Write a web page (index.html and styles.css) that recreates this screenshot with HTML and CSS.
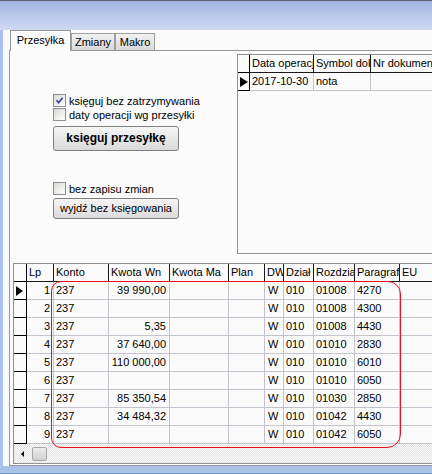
FILE: index.html
```html
<!DOCTYPE html>
<html lang="pl">
<head>
<meta charset="utf-8">
<title>Przesyłka</title>
<link rel="stylesheet" href="styles.css">
</head>
<body>
<div class="titlebar"></div>
<div class="main">
  <div class="tabs">
    <div class="tab active">Przesyłka</div>
    <div class="tab t2">Zmiany</div>
    <div class="tab t3">Makro</div>
  </div>
  <div class="page">
    <div class="top">
      <div class="opts">
        <label class="cb"><span class="box"><svg width="11" height="11" viewBox="0 0 11 11"><path d="M2.5 5.2 L4.6 7.6 L8.6 2.8" fill="none" stroke="#3a4aa8" stroke-width="1.7"/></svg></span>księguj bez zatrzymywania</label>
        <label class="cb"><span class="box"></span>daty operacji wg przesyłki</label>
        <div class="btn bold">księguj przesyłkę</div>
        <label class="cb cb3"><span class="box"></span>bez zapisu zmian</label>
        <div class="btn small">wyjdź bez księgowania</div>
      </div>
      <div class="grid1">
        <div class="r1 hdr">
          <div class="c ind"></div>
          <div class="c h">Data operacji</div>
          <div class="c h">Symbol dokumentu</div>
          <div class="c h">Nr dokumentu</div>
        </div>
        <div class="r1">
          <div class="c ind"><span class="arrow"></span></div>
          <div class="c">2017-10-30</div>
          <div class="c">nota</div>
          <div class="c"></div>
        </div>
      </div>
    </div>
    <div class="grid2">
      <div class="r2 hdr">
        <div class="c ind"></div>
        <div class="c h">Lp</div>
        <div class="c h">Konto</div>
        <div class="c h">Kwota Wn</div>
        <div class="c h">Kwota Ma</div>
        <div class="c h">Plan</div>
        <div class="c h">DW</div>
        <div class="c h">Dział</div>
        <div class="c h">Rozdział</div>
        <div class="c h">Paragraf</div>
        <div class="c h last">EU</div>
      </div>
      <div class="r2"><div class="c ind"><span class="arrow"></span></div><div class="c num">1</div><div class="c">237</div><div class="c num">39 990,00</div><div class="c"></div><div class="c"></div><div class="c dw">W</div><div class="c">010</div><div class="c">01008</div><div class="c">4270</div><div class="c last"></div></div>
      <div class="r2"><div class="c ind"></div><div class="c num">2</div><div class="c">237</div><div class="c num"></div><div class="c"></div><div class="c"></div><div class="c dw">W</div><div class="c">010</div><div class="c">01008</div><div class="c">4300</div><div class="c last"></div></div>
      <div class="r2"><div class="c ind"></div><div class="c num">3</div><div class="c">237</div><div class="c num">5,35</div><div class="c"></div><div class="c"></div><div class="c dw">W</div><div class="c">010</div><div class="c">01008</div><div class="c">4430</div><div class="c last"></div></div>
      <div class="r2"><div class="c ind"></div><div class="c num">4</div><div class="c">237</div><div class="c num">37 640,00</div><div class="c"></div><div class="c"></div><div class="c dw">W</div><div class="c">010</div><div class="c">01010</div><div class="c">2830</div><div class="c last"></div></div>
      <div class="r2"><div class="c ind"></div><div class="c num">5</div><div class="c">237</div><div class="c num">110 000,00</div><div class="c"></div><div class="c"></div><div class="c dw">W</div><div class="c">010</div><div class="c">01010</div><div class="c">6010</div><div class="c last"></div></div>
      <div class="r2"><div class="c ind"></div><div class="c num">6</div><div class="c">237</div><div class="c num"></div><div class="c"></div><div class="c"></div><div class="c dw">W</div><div class="c">010</div><div class="c">01010</div><div class="c">6050</div><div class="c last"></div></div>
      <div class="r2"><div class="c ind"></div><div class="c num">7</div><div class="c">237</div><div class="c num">85 350,54</div><div class="c"></div><div class="c"></div><div class="c dw">W</div><div class="c">010</div><div class="c">01030</div><div class="c">2850</div><div class="c last"></div></div>
      <div class="r2"><div class="c ind"></div><div class="c num">8</div><div class="c">237</div><div class="c num">34 484,32</div><div class="c"></div><div class="c"></div><div class="c dw">W</div><div class="c">010</div><div class="c">01042</div><div class="c">4430</div><div class="c last"></div></div>
      <div class="r2"><div class="c ind"></div><div class="c num">9</div><div class="c">237</div><div class="c num"></div><div class="c"></div><div class="c"></div><div class="c dw">W</div><div class="c">010</div><div class="c">01042</div><div class="c">6050</div><div class="c last"></div></div>
      <div class="sb">
        <div class="sb-arrow"><span class="larr"></span></div>
        <div class="thumb"></div>
      </div>
    </div>
  </div>
</div>
<div class="bottom"></div>
<div class="annot"></div>
</body>
</html>
```

FILE: styles.css
```css
* { box-sizing: border-box; }
html, body { margin: 0; padding: 0; }
body {
  width: 432px;
  height: 474px;
  overflow: hidden;
  background: #fafafa;
  font-family: "Liberation Sans", Arial, sans-serif;
  font-size: 11px;
  color: #000;
  border-top: 1px solid #5c5f70;
  position: relative;
}
.titlebar {
  height: 29px;
  background: linear-gradient(#a2b4e2, #cfdaf2);
}
.main {
  height: 436px;
  border-left: 3px solid #abc0e8;
  padding-left: 6px;
  overflow: hidden;
}
.tabs {
  height: 20px;
  display: flex;
  align-items: flex-end;
  padding-left: 1px;
  position: relative;
  z-index: 1;
}
.tab {
  height: 17px;
  border: 1px solid #a0a0a0;
  border-bottom: none;
  background: linear-gradient(#f2f2f2, #d9d9d9);
  line-height: 16px;
  text-align: center;
  white-space: nowrap;
}
.tab.active {
  width: 61px;
  height: 21px;
  margin-bottom: -1px;
  padding-top: 1px;
  background: #fbfbfb;
  border-color: #919b9c;
}
.t2 { width: 44px; }
.t3 { width: 40px; }
.page {
  height: 416px;
  width: 470px;
  border: 1px solid #919b9c;
  background: #fbfbfb;
}
.top {
  height: 212px;
  display: flex;
}
.opts {
  width: 227px;
  padding: 43px 0 0 43px;
}
.cb {
  display: flex;
  align-items: center;
  height: 13px;
  margin-bottom: 1px;
  white-space: nowrap;
}
.box {
  width: 13px;
  height: 13px;
  margin-right: 3px;
  border: 1px solid #8e8f8f;
  background: linear-gradient(135deg, #d8d8d3, #ffffff);
  display: flex;
}
.btn {
  width: 126px;
  border: 1px solid #7f7f7f;
  border-radius: 3px;
  background: linear-gradient(#f6f6f6, #dadada);
  text-align: center;
  white-space: nowrap;
}
.btn.bold {
  height: 25px;
  line-height: 23px;
  margin-top: 5px;
  font-weight: bold;
  font-size: 12px;
}
.cb3 { margin-top: 31px; }
.btn.small {
  height: 21px;
  line-height: 19px;
  margin-top: 3px;
}
.grid1 {
  margin-top: 3px;
  height: 200px;
  width: 240px;
  border: 1px solid #8f8f8f;
  border-right: none;
  overflow: hidden;
}
.r1 {
  display: grid;
  grid-template-columns: 12px 64px 57px 100px;
}
.r2 {
  display: grid;
  grid-template-columns: 13px 27px 55px 61px 59px 36px 19px 30px 41px 45px 60px;
}
.c {
  height: 18px;
  line-height: 17px;
  border-right: 1px solid #c4c2cc;
  border-bottom: 1px solid #c4c2cc;
  padding: 0 3px 0 2px;
  white-space: nowrap;
  overflow: hidden;
}
.hdr .c {
  border-right-color: #1a1a1a;
  border-bottom-color: #1a1a1a;
}
.grid1 .hdr .c { height: 18px; }
.c.ind {
  border-right-color: #000;
  border-bottom-color: #000;
  padding: 0 0 0 2px;
  display: flex;
  align-items: center;
}
.c.num { text-align: right; }
.c.dw { padding-left: 3px; }
.c.last { border-right: none; }
.arrow {
  width: 0;
  height: 0;
  border-left: 7px solid #000;
  border-top: 5px solid transparent;
  border-bottom: 5px solid transparent;
}
.grid1 .arrow {
  border-left-width: 8px;
  border-top-width: 5.5px;
  border-bottom-width: 5.5px;
}
.grid2 {
  margin-left: 3px;
  height: 201px;
  width: 460px;
  border: 1px solid #8f8f8f;
  border-right: none;
  overflow: hidden;
}
.sb {
  height: 19px;
  display: flex;
  align-items: center;
  background: repeating-conic-gradient(#e2e2e2 0 25%, #fbfbfb 0 50%) 0 0 / 2px 2px;
}
.sb-arrow {
  width: 18px;
  height: 19px;
  display: flex;
  align-items: center;
  padding-left: 7px;
}
.larr {
  width: 0;
  height: 0;
  border-right: 3px solid #000;
  border-top: 3px solid transparent;
  border-bottom: 3px solid transparent;
}
.thumb {
  width: 15px;
  height: 14px;
  border: 1px solid #a8a8a8;
  border-radius: 2px;
  background: linear-gradient(#eeeeee, #cfcfcf);
}
.bottom {
  height: 8px;
  background: #aac2e8;
  border-bottom: 1px solid #6f93bd;
}
.annot {
  position: absolute;
  left: 51px;
  top: 280px;
  width: 350px;
  height: 167px;
  border: 1px solid #e8101a;
  border-radius: 10px 13px 14px 10px;
  pointer-events: none;
}
```
